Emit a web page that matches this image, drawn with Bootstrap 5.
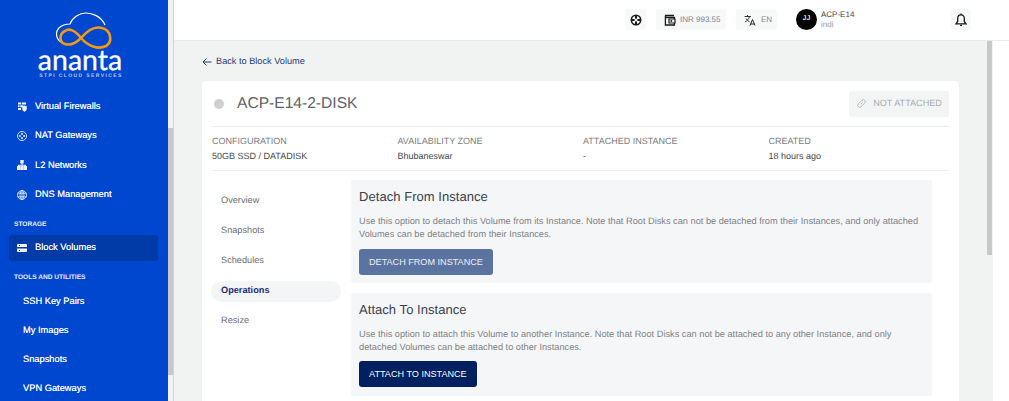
<!DOCTYPE html>
<html lang="en">
<head>
    <meta charset="UTF-8">
    <meta name="viewport" content="width=device-width, initial-scale=1.0">
    <title>Block Volume Operations</title>
    <link rel="stylesheet" href="https://cdn.jsdelivr.net/npm/bootstrap@5.3.0/dist/css/bootstrap.min.css">
    <script src="https://cdn.jsdelivr.net/npm/bootstrap@5.3.0/dist/js/bootstrap.bundle.min.js"></script>
    <style>
        html, body { height: 401px; overflow: hidden; }
        body { font-family: "Liberation Sans", Arial, sans-serif; font-size: 10px; background: #fff; color: #3f4254; text-rendering: geometricPrecision; }

        /* sidebar */
        .side-wrap { width: 168px; height: 401px; background: #0047cf; overflow: hidden; flex: none; }
        .side-logo { height: 92.5px; }
        .logo-mark { margin-top: 12px; flex: none; }
        .logo-name { font-family: "Lato", sans-serif; font-size: 28.5px; line-height: 18px; color: #fff; -webkit-text-stroke: .3px #fff; margin-left: -8px; margin-top: -1px; }
        .logo-sub { font-size: 5px; line-height: 8px; letter-spacing: 1.4px; color: #b9c9ee; font-weight: 700; margin-top: 3px; margin-left: -6px; white-space: nowrap; }
        .side-item { height: 29.2px; padding-left: 17px; color: #eef3ff; font-size: 9.3px; text-shadow: 0 0 .4px #fff; gap: 8px; text-decoration: none; }
        .side-item svg { width: 10px; height: 10px; flex: none; fill: #eef3ff; }
        .side-item.plain { padding-left: 23px; }
        .side-item.on { height: 26px; margin: 0 10px 0 9px; padding-left: 8px; background: #003ba8; border-radius: 3px; }
        .side-head { font-size: 6.6px; font-weight: 700; color: #e6edff; padding-left: 14px; line-height: 10px; }
        .head-a { margin-top: 11px; margin-bottom: 5px; }
        .head-b { margin-top: 11.5px; margin-bottom: 4.5px; }
        .side-track { width: 6px; height: 401px; background: #f1f1f1; border-right: 1px solid #cdd3ee; flex: none; padding-top: 128px; }
        .side-thumb { width: 5px; height: 247px; background: #c8c8c8; }

        /* top bar */
        .right-wrap { min-width: 0; }
        .top-strip { height: 41px; background: #fff; border-bottom: 1px solid #e9ebeb; padding-left: 451px; padding-top: 9px; flex: none; }
        .top-chip { height: 21px; background: #f7f8f8; border-radius: 3px; color: #7e8299; font-size: 8px; gap: 4px; padding: 0 8px; white-space: nowrap; }
        .top-chip svg { width: 12px; height: 12px; flex: none; }
        .chip-life { width: 21px; padding: 0; justify-content: center; margin-right: 10px; }
        .chip-wallet { width: 70px; margin-right: 10px; }
        .chip-lang { width: 41px; margin-right: 19px; gap: 5px; }
        .avatar-dot { width: 21px; height: 21px; border-radius: 50%; background: #050505; color: #ddd; font-size: 7px; font-weight: 700; flex: none; }
        .user-box { width: 134px; padding-left: 4px; padding-top: 1px; font-size: 8px; line-height: 10px; }
        .user-box b { font-weight: 400; color: #444; display: block; }
        .user-box span { color: #999; display: block; }
        .chip-bell { width: 20px; padding: 0; justify-content: center; }
        .chip-bell svg { width: 14px; height: 14px; }

        /* main */
        .main-wrap { background: #f1f3f3; width: 819px; }
        .main-pad { padding: 0 28px; width: 785px; }
        .main-bar { width: 5px; height: 214px; background: #c8c8c8; margin-right: 1px; }
        .back-link { height: 40px; padding-top: 2px; color: #1d3a78; font-size: 9.2px; gap: 4px; text-decoration: none; }
        .back-link svg { width: 10px; height: 10px; }
        .vol-card { width: 757px; background: #fff; border-radius: 4px; padding: 0 10px; box-shadow: 0 0 2px rgba(0,0,0,.04); height: 330px; }
        .vol-head { height: 46px; border-bottom: 1px solid #eceeee; }
        .vol-dot { width: 10px; height: 10px; border-radius: 50%; background: #cfcfcf; margin-left: 2px; margin-right: 13px; }
        .vol-title { font-size: 15.6px; color: #5e6167; }
        .state-btn { width: 100px; height: 26px; background: #f3f5f5; border-radius: 2px; font-size: 9.1px; color: #a9acb0; gap: 6px; }
        .state-btn svg { width: 11px; height: 11px; }
        .meta-row { display: grid; grid-template-columns: repeat(4, 185.5px); height: 44px; padding-top: 7px; border-bottom: 1px solid #eceeee; font-size: 9px; line-height: 15px; }
        .meta-label { color: #7a7d80; }
        .meta-val { color: #45484c; }
        .tab-col { width: 139px; flex: none; padding-top: 19px; }
        .tab-link { height: 21px; margin-bottom: 9.2px; padding-left: 10px; border-radius: 11px; color: #6a6d72; font-size: 9.2px; width: 130px; margin-left: -1px; text-decoration: none; }
        .tab-link.on { background: #f4f5f7; color: #1d2f78; font-weight: 700; }
        .op-col { padding-top: 9px; }
        .op-panel { width: 581px; height: 103px; background: #f5f6f8; border-radius: 3px; padding: 9px 8px 0; margin-bottom: 9.5px; }
        .op-panel h5 { font-size: 13px; line-height: 16px; font-weight: 400; color: #3a3f4b; margin: 0 0 10px; letter-spacing: .05px; }
        .op-panel p { font-size: 9.23px; line-height: 13.3px; color: #7d8084; margin: 0 0 7px; width: 565px; }
        .op-btn { font-size: 9.1px; height: 26px; line-height: 1; padding: 1px 10px 0; border-radius: 3px; color: #fff; border: 0; }
        .op-detach, .op-detach:disabled { background: #5b73a0; color: #eef1f6; opacity: 1; }
        .op-attach { background: #00215f; }
        .op-attach:hover { background: #00215f; color: #fff; }
    </style>
</head>
<body>
<div class="d-flex">

    <!-- Sidebar -->
    <div class="side-wrap">
        <div class="side-logo d-flex flex-column align-items-center">
            <svg class="logo-mark" width="62" height="40" viewBox="0 0 62 40">
                <path d="M8 30C3 27 2 20 6 16C9 13 14 12 17 12C19 6 26 1 33 1C39 1 48 4 52 13" fill="none" stroke="#fff" stroke-width="1.200"/>
                <path d="M28 26C22 18 16 16 12 19C6 22 6 30 12 32C18 34 24 30 28 26C34 19 41 14 49 16C58 18 60 30 53 34C45 38 35 34 28 26" fill="none" stroke="#f39a12" stroke-width="2.600"/>
            </svg>
            <div class="logo-name">ananta</div>
            <div class="logo-sub">STPI CLOUD SERVICES</div>
        </div>
        <a class="side-item d-flex align-items-center" href="#"><svg viewBox="0 0 10 10"><path d="M1 .5h3v2H1zM4.700.5H9v2H4.700zM1 3.200h1.500v2H1zM3.200 3.200h3v2h-3zM1 5.900h3v2H1z"/><path d="M7.500 3.500l2.300.8v2.500c0 1.300-1 2.300-2.300 2.900-1.300-.6-2.300-1.600-2.300-2.900V4.300z"/></svg>Virtual Firewalls</a>
        <a class="side-item d-flex align-items-center" href="#"><svg viewBox="0 0 10 10"><circle cx="5" cy="5" r="4.500" fill="none" stroke="#eef3ff" stroke-width=".9"/><circle cx="5" cy="2.900" r="1"/><circle cx="5" cy="7.100" r="1"/><circle cx="2.900" cy="5" r="1"/><circle cx="7.100" cy="5" r="1"/></svg>NAT Gateways</a>
        <a class="side-item d-flex align-items-center" href="#"><svg viewBox="0 0 10 10"><path d="M3.300 0h3.400v3.400H3.300zM4.500 3h1v1.800H9V6H8V5.800H5.500V6h-1v-.2H2V6H1V4.800h3.500zM0 6h3.200v4H0zM3.400 6h3.200v4H3.400zM6.800 6H10v4H6.800z"/></svg>L2 Networks</a>
        <a class="side-item d-flex align-items-center" href="#"><svg viewBox="0 0 10 10"><circle cx="5" cy="5" r="4.500" fill="none" stroke="#eef3ff" stroke-width=".8"/><ellipse cx="5" cy="5" rx="2" ry="4.500" fill="none" stroke="#eef3ff" stroke-width=".8"/><path d="M.5 3.200h9M.5 6.800h9M5 .5v9" stroke="#eef3ff" stroke-width=".8"/></svg>DNS Management</a>
        <div class="side-head head-a">STORAGE</div>
        <a class="side-item on d-flex align-items-center" href="#"><svg viewBox="0 0 10 10"><path fill-rule="evenodd" d="M1 1h8a1 1 0 0 1 1 1v2H0V2a1 1 0 0 1 1-1zm1 1v1h1V2zM0 5.500h10V8a1 1 0 0 1-1 1H1a1 1 0 0 1-1-1zM2 7v1h1V7z"/></svg>Block Volumes</a>
        <div class="side-head head-b">TOOLS AND UTILITIES</div>
        <a class="side-item plain d-flex align-items-center" href="#">SSH Key Pairs</a>
        <a class="side-item plain d-flex align-items-center" href="#">My Images</a>
        <a class="side-item plain d-flex align-items-center" href="#">Snapshots</a>
        <a class="side-item plain d-flex align-items-center" href="#">VPN Gateways</a>
    </div>
    <div class="side-track"><div class="side-thumb"></div></div>

    <div class="right-wrap flex-grow-1 d-flex flex-column">
        <!-- Top bar -->
        <div class="top-strip d-flex">
            <div class="top-chip chip-life d-flex align-items-center">
                <svg viewBox="0 0 12 12"><circle cx="6" cy="6" r="4.700" fill="none" stroke="#1a1a1a" stroke-width="1.600"/><path d="M6 1v10M1 6h10" stroke="#1a1a1a" stroke-width="2"/><circle cx="6" cy="6" r="1.500" fill="#f7f8f8"/></svg>
            </div>
            <div class="top-chip chip-wallet d-flex align-items-center">
                <svg viewBox="0 0 12 12"><path d="M1 1.500h9M1.400 1.500v9.500h9V3.500h-9" fill="none" stroke="#1a1a1a" stroke-width="1.300"/><path d="M5 5h6v4H5z" fill="#f7f8f8" stroke="#1a1a1a" stroke-width="1.200"/><circle cx="7.300" cy="7" r=".9" fill="#1a1a1a"/></svg>
                INR 993.55
            </div>
            <div class="top-chip chip-lang d-flex align-items-center">
                <svg viewBox="0 0 12 12"><path d="M.5 2.500h6.500M3.500 1v1.500M5.500 2.500C5 4.800 3.300 6.800 1 8M2 4.500C3 6 4 7 5.500 7.800" fill="none" stroke="#222" stroke-width=".9"/><path d="M6 11.500L8.500 5.500 11 11.500M6.900 10h3.200" fill="none" stroke="#222" stroke-width="1"/></svg>
                EN
            </div>
            <div class="avatar-dot d-flex align-items-center justify-content-center">JJ</div>
            <div class="user-box"><b>ACP-E14</b><span>indi</span></div>
            <div class="top-chip chip-bell d-flex align-items-center">
                <svg viewBox="0 0 14 14"><path d="M7 1.800C4.800 1.800 3.700 3.400 3.700 5.500V8.500L2 10.800h10L10.300 8.500V5.500C10.300 3.400 9.200 1.800 7 1.800z" fill="none" stroke="#1a1a1a" stroke-width="1.300"/><path d="M7 .5v1.300M6 12.300h2" stroke="#1a1a1a" stroke-width="1.300"/></svg>
            </div>
        </div>

        <!-- Main -->
        <div class="main-wrap flex-grow-1 d-flex justify-content-between">
            <div class="main-pad">
                <a class="back-link d-flex align-items-center" href="#">
                    <svg viewBox="0 0 10 10"><path d="M9.500 5H1M4.500 1.500L1 5l3.500 3.500" fill="none" stroke="#1d3a78" stroke-width="1"/></svg>
                    Back to Block Volume
                </a>
                <div class="vol-card">
                    <div class="vol-head d-flex align-items-center">
                        <span class="vol-dot"></span>
                        <span class="vol-title flex-grow-1">ACP-E14-2-DISK</span>
                        <div class="state-btn d-flex align-items-center justify-content-center">
                            <svg viewBox="0 0 12 12"><path d="M5 7l2-2M4.500 4.500l2-2a2 2 0 0 1 3 3l-2 2M7.500 7.500l-2 2a2 2 0 0 1-3-3l2-2" fill="none" stroke="#a9acb0" stroke-width=".9"/></svg>
                            NOT ATTACHED
                        </div>
                    </div>
                    <div class="meta-row">
                        <div><div class="meta-label">CONFIGURATION</div><div class="meta-val">50GB SSD / DATADISK</div></div>
                        <div><div class="meta-label">AVAILABILITY ZONE</div><div class="meta-val">Bhubaneswar</div></div>
                        <div><div class="meta-label">ATTACHED INSTANCE</div><div class="meta-val">-</div></div>
                        <div><div class="meta-label">CREATED</div><div class="meta-val">18 hours ago</div></div>
                    </div>
                    <div class="d-flex">
                        <div class="tab-col">
                            <a class="tab-link d-flex align-items-center" href="#">Overview</a>
                            <a class="tab-link d-flex align-items-center" href="#">Snapshots</a>
                            <a class="tab-link d-flex align-items-center" href="#">Schedules</a>
                            <a class="tab-link on d-flex align-items-center" href="#">Operations</a>
                            <a class="tab-link d-flex align-items-center" href="#">Resize</a>
                        </div>
                        <div class="op-col">
                            <div class="op-panel">
                                <h5>Detach From Instance</h5>
                                <p>Use this option to detach this Volume from its Instance. Note that Root Disks can not be detached from their Instances, and only attached Volumes can be detached from their Instances.</p>
                                <button class="btn op-btn op-detach" disabled>DETACH FROM INSTANCE</button>
                            </div>
                            <div class="op-panel">
                                <h5>Attach To Instance</h5>
                                <p>Use this option to attach this Volume to another Instance. Note that Root Disks can not be attached to any other Instance, and only detached Volumes can be attached to other Instances.</p>
                                <button class="btn op-btn op-attach">ATTACH TO INSTANCE</button>
                            </div>
                        </div>
                    </div>
                </div>
            </div>
            <div class="main-bar"></div>
        </div>
    </div>
</div>
</body>
</html>
